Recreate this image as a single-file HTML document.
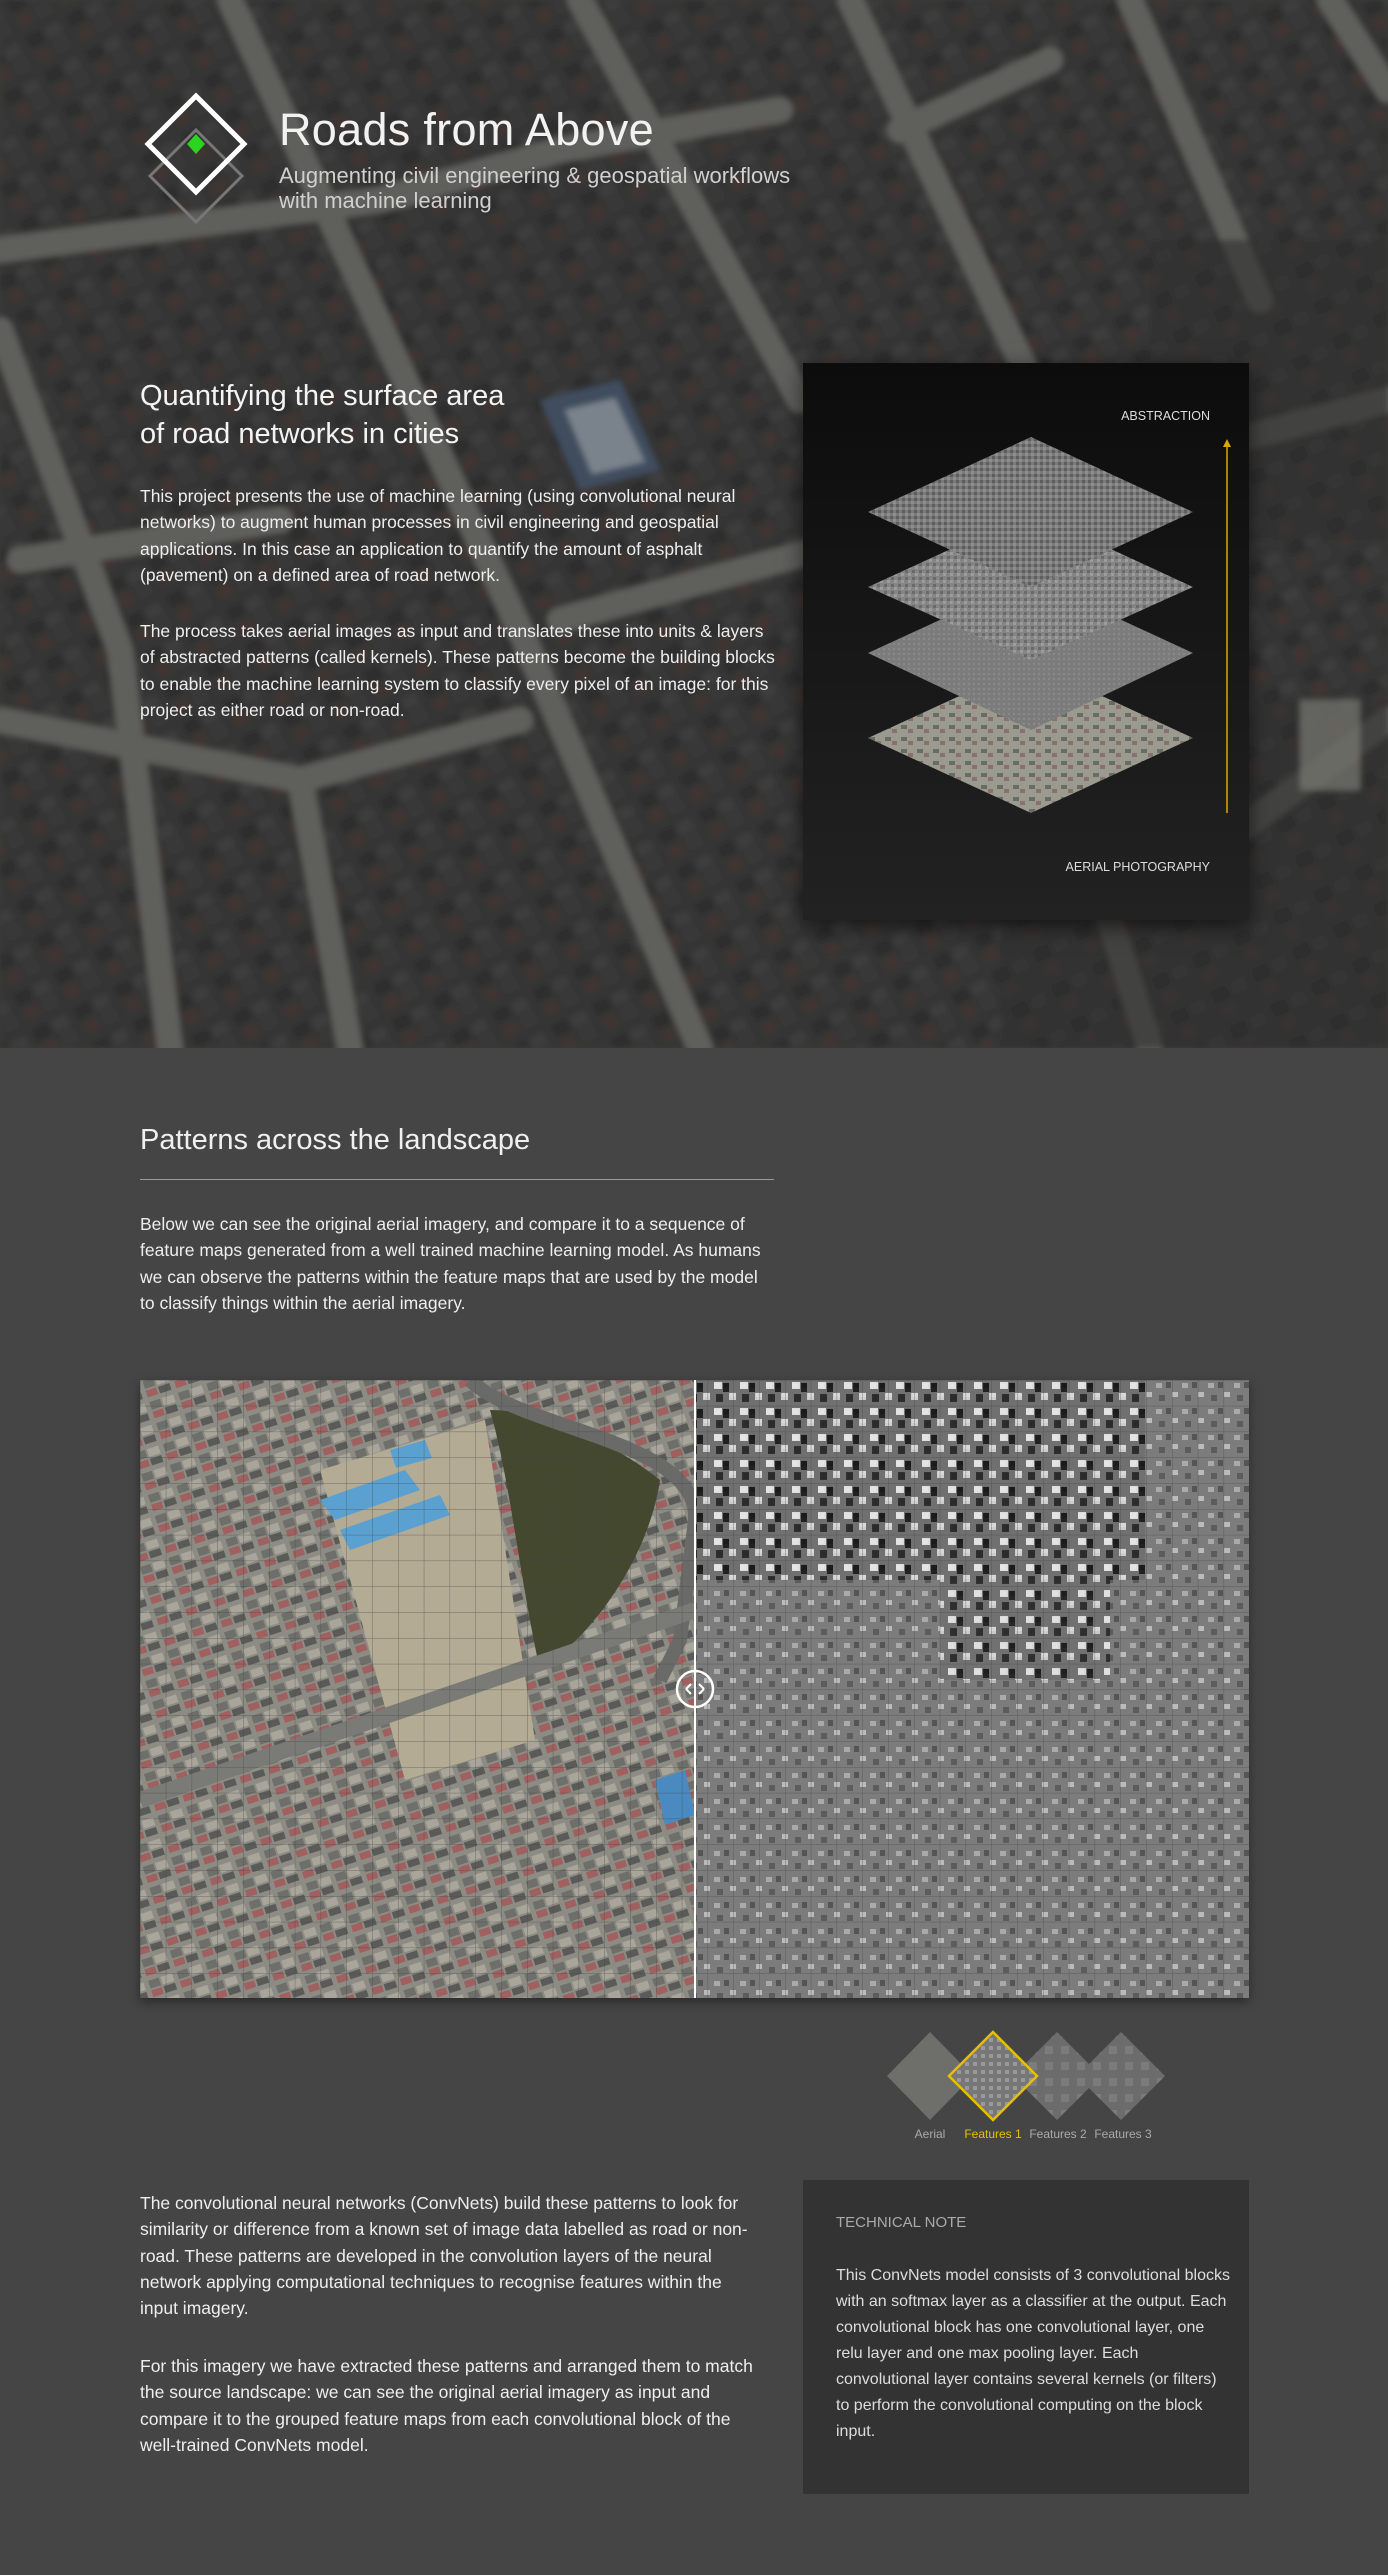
<!DOCTYPE html>
<html><head><meta charset="utf-8">
<style>
*{margin:0;padding:0;box-sizing:border-box}
body{width:1388px;height:2575px;background:#454545;font-family:"Liberation Sans",sans-serif;color:#fff;position:relative;overflow:hidden}
.abs{position:absolute}
.hero{position:absolute;left:0;top:0;width:1388px;height:1048px;background:#3a3a38;overflow:hidden}
.title{left:279px;top:104px;font-size:45px;font-weight:300;color:#f2f2f2;letter-spacing:0.3px}
.sub{left:279px;top:163px;font-size:22px;line-height:25px;color:#d0d0d0}
.h2{left:140px;top:377px;font-size:29px;line-height:38px;color:#f4f4f4}
.p{left:140px;width:620px;font-size:17.5px;line-height:26.3px;color:#eee}
.box{left:803px;top:363px;width:446px;height:557px;background:linear-gradient(#0c0c0c,#222);box-shadow:0 6px 20px rgba(0,0,0,.6)}
.h3{left:140px;top:1124px;font-size:29px;color:#f0f0f0}
.rule{left:140px;top:1179px;width:634px;height:1px;background:#9a9a9a}
.note{left:803px;top:2180px;width:446px;height:314px;background:#333}
.lbl{top:2127px;font-size:12px;color:#aaa;text-align:center;width:70px}
</style></head><body>
<div class="hero">
<svg width="1388" height="1048" viewBox="0 0 1388 1048">
<defs>
<pattern id="houses" width="46" height="40" patternUnits="userSpaceOnUse" patternTransform="rotate(-28)">
<rect width="46" height="40" fill="#363634"/>
<rect x="4" y="4" width="18" height="14" fill="#2e2e2d"/>
<rect x="25" y="6" width="16" height="12" fill="#3e3e3c"/>
<rect x="6" y="22" width="15" height="13" fill="#413432"/>
<rect x="26" y="22" width="16" height="14" fill="#393937"/>
</pattern>
<filter id="bl"><feGaussianBlur stdDeviation="3"/></filter>
</defs>
<g filter="url(#bl)">
<rect width="1388" height="1048" fill="url(#houses)"/>
<g stroke="#5f5f5b" stroke-width="26" fill="none" stroke-linecap="round">
<path d="M230 0 L520 630 L700 1048"/>
<path d="M0 330 L120 650 L170 1048"/>
<path d="M580 0 L800 400"/>
<path d="M850 0 L1030 380 L1150 560"/>
<path d="M1130 0 L1260 300"/>
<path d="M1330 0 L1388 90"/>
<path d="M0 250 L380 200 L560 150 L780 110"/>
<path d="M560 620 L780 560 L1388 400"/>
<path d="M0 720 L300 780 L520 720"/>
<path d="M300 780 L350 1048"/>
<path d="M900 130 L1050 60"/>
<path d="M20 560 L280 520"/>
<path d="M1110 920 L1150 1048"/>
<path d="M1200 860 L1388 720"/>
</g>
<rect x="1000" y="700" width="388" height="348" fill="#30302e" opacity=".6"/>
<rect x="1150" y="240" width="238" height="300" fill="#30302e" opacity=".6"/>
<polygon points="540,400 620,380 660,470 580,490" fill="#3f4d5e"/>
<polygon points="565,410 615,398 645,462 592,474" fill="#7a838c"/>
<rect x="1300" y="700" width="60" height="90" fill="#85857f" opacity=".6"/>
</g>
</svg>
</div>

<svg class="abs" style="left:140px;top:90px" width="112" height="140" viewBox="0 0 112 140">
<polygon points="56,40 102,86 56,132 10,86" fill="none" stroke="#777" stroke-width="3"/>
<polygon points="56,6 104,54 56,102 8,54" fill="none" stroke="#fff" stroke-width="5"/>
<polygon points="56,44 65,54 56,64 47,54" fill="#2bd41e"/>
</svg>
<div class="abs title">Roads from Above</div>
<div class="abs sub">Augmenting civil engineering &amp; geospatial workflows<br>with machine learning</div>
<div class="abs h2">Quantifying the surface area<br>of road networks in cities</div>
<div class="abs p" style="top:483px;width:636px">This project presents the use of machine learning (using convolutional neural networks) to augment human processes in civil engineering and geospatial applications. In this case an application to quantify the amount of asphalt (pavement) on a defined area of road network.</div>
<div class="abs p" style="top:618px;width:636px">The process takes aerial images as input and translates these into units &amp; layers of abstracted patterns (called kernels). These patterns become the building blocks to enable the machine learning system to classify every pixel of an image: for this project as either road or non-road.</div>

<div class="abs box">
<div class="abs" style="right:39px;top:46px;font-size:12.5px;color:#ddd">ABSTRACTION</div>
<div class="abs" style="right:39px;top:497px;font-size:12.5px;color:#ddd">AERIAL PHOTOGRAPHY</div>
<svg class="abs" style="left:0;top:0" width="446" height="557">
<defs>
<pattern id="n1" width="6" height="6" patternUnits="userSpaceOnUse"><rect width="6" height="6" fill="#7a7a7a"/><rect width="3" height="3" fill="#8e8e8e"/><rect x="3" y="3" width="3" height="3" fill="#5e5e5e"/></pattern>
<pattern id="n2" width="7" height="7" patternUnits="userSpaceOnUse"><rect width="7" height="7" fill="#858585"/><rect width="3" height="3" fill="#9c9c9c"/><rect x="4" y="4" width="3" height="3" fill="#6a6a6a"/></pattern>
<pattern id="n3" width="5" height="5" patternUnits="userSpaceOnUse"><rect width="5" height="5" fill="#7c7c7c"/><rect width="2" height="2" fill="#8a8a8a"/></pattern>
<pattern id="n4" width="16" height="12" patternUnits="userSpaceOnUse"><rect width="16" height="12" fill="#9a9a8e"/><rect x="2" y="2" width="6" height="4" fill="#6a6a66"/><rect x="9" y="6" width="5" height="4" fill="#8c7070"/></pattern>
</defs>
<polygon points="65,375 228,300 390,375 228,450" fill="url(#n4)"/>
<polygon points="65,290 228,215 390,290 228,367" fill="url(#n3)"/>
<polygon points="65,224 228,149 390,224 228,297" fill="url(#n2)"/>
<polygon points="65,149 228,74 390,149 228,224" fill="url(#n1)"/>
<line x1="424" y1="82" x2="424" y2="450" stroke="#d9a800" stroke-width="1.5"/>
<polygon points="424,76 420,84 428,84" fill="#d9a800"/>
</svg>
</div>

<div class="abs h3">Patterns across the landscape</div>
<div class="abs rule"></div>
<div class="abs p" style="top:1211px;width:630px">Below we can see the original aerial imagery, and compare it to a sequence of feature maps generated from a well trained machine learning model. As humans we can observe the patterns within the feature maps that are used by the model to classify things within the aerial imagery.</div>

<svg class="abs" style="left:140px;top:1380px;box-shadow:0 4px 10px rgba(0,0,0,.4)" width="1109" height="618">
<defs>
<pattern id="city" width="30" height="22" patternUnits="userSpaceOnUse" patternTransform="rotate(-18)">
<rect width="30" height="22" fill="#8c8c84"/>
<rect x="2" y="2" width="11" height="8" fill="#6e6e6a"/>
<rect x="15" y="2" width="12" height="8" fill="#a9a59a"/>
<rect x="2" y="12" width="11" height="7" fill="#a06060"/>
<rect x="15" y="12" width="12" height="7" fill="#5a5a58"/>
</pattern>
<pattern id="feat" width="26" height="26" patternUnits="userSpaceOnUse">
<rect width="26" height="26" fill="#7c7c7c"/>
<rect x="2" y="3" width="6" height="5" fill="#aaa"/><rect x="12" y="2" width="5" height="6" fill="#555"/>
<rect x="18" y="12" width="6" height="5" fill="#bbb"/><rect x="5" y="15" width="6" height="6" fill="#5c5c5c"/>
</pattern>
<pattern id="feat2" width="26" height="26" patternUnits="userSpaceOnUse">
<rect width="26" height="26" fill="#6e6e6e"/>
<rect x="2" y="2" width="8" height="7" fill="#eee"/><rect x="11" y="3" width="6" height="9" fill="#111"/>
<rect x="17" y="13" width="7" height="7" fill="#ddd"/><rect x="4" y="14" width="7" height="8" fill="#222"/>
</pattern>
<pattern id="grid" width="25.8" height="25.8" patternUnits="userSpaceOnUse"><path d="M0 0H25.8M0 0V25.8" stroke="#444" stroke-width="1" opacity=".6"/></pattern>
</defs>
<rect width="555" height="618" fill="url(#city)"/>
<polygon points="180,90 345,40 395,360 265,400" fill="#b3ab94"/>
<path d="M350 30 C400 30 470 60 520 100 C510 170 460 250 400 290 C380 200 370 100 350 30Z" fill="#44482e"/>
<path d="M330 0 C380 50 560 60 555 140 L540 260 L520 300" stroke="#6a6a68" stroke-width="14" fill="none"/>
<path d="M0 420 L555 230" stroke="#7a7a76" stroke-width="16"/>
<polygon points="180,120 265,90 280,110 195,140" fill="#5aa0d0"/>
<polygon points="200,150 300,115 310,135 210,170" fill="#5aa0d0"/>
<polygon points="250,70 285,60 292,78 256,88" fill="#5aa0d0"/>
<polygon points="515,400 545,390 555,435 525,445" fill="#4a8ac0"/>
<rect x="555" width="554" height="618" fill="url(#feat)"/>
<rect x="555" width="450" height="200" fill="url(#feat2)" opacity=".85"/>
<rect x="800" y="200" width="170" height="100" fill="url(#feat2)" opacity=".8"/>
<rect width="1109" height="618" fill="url(#grid)"/>
<line x1="555" y1="0" x2="555" y2="618" stroke="#fff" stroke-width="2"/>
<circle cx="555" cy="309" r="18" fill="none" stroke="#fff" stroke-width="2.5"/>
<path d="M546 309 L551 304 M546 309 L551 314 M564 309 L559 304 M564 309 L559 314" stroke="#fff" stroke-width="2"/>
</svg>

<svg class="abs" style="left:885px;top:2030px" width="290" height="96">
<defs>
<pattern id="t1" width="8" height="8" patternUnits="userSpaceOnUse"><rect width="8" height="8" fill="#777"/><rect width="4" height="4" fill="#999"/></pattern>
<pattern id="t2" width="16" height="16" patternUnits="userSpaceOnUse"><rect width="16" height="16" fill="#6c6c6c"/><rect width="8" height="8" fill="#7c7c7c"/></pattern>
</defs>
<polygon points="45,2 88,46 45,90 2,46" fill="#6e6e6a"/>
<polygon points="236,2 280,46 236,90 192,46" fill="url(#t2)"/>
<polygon points="172,2 216,46 172,90 128,46" fill="url(#t2)"/>
<polygon points="108,2 152,46 108,90 64,46" fill="url(#t1)" stroke="#e8c000" stroke-width="2.5"/>
</svg>
<div class="abs lbl" style="left:895px">Aerial</div>
<div class="abs lbl" style="left:958px;color:#e6c000">Features 1</div>
<div class="abs lbl" style="left:1023px">Features 2</div>
<div class="abs lbl" style="left:1088px">Features 3</div>

<div class="abs p" style="top:2190px;width:620px">The convolutional neural networks (ConvNets) build these patterns to look for similarity or difference from a known set of image data labelled as road or non-road. These patterns are developed in the convolution layers of the neural network applying computational techniques to recognise features within the input imagery.</div>
<div class="abs p" style="top:2353px;width:620px">For this imagery we have extracted these patterns and arranged them to match the source landscape: we can see the original aerial imagery as input and compare it to the grouped feature maps from each convolutional block of the well-trained ConvNets model.</div>

<div class="abs note">
<div class="abs" style="left:33px;top:34px;font-size:15px;color:#aaa">TECHNICAL NOTE</div>
<div class="abs" style="left:33px;top:83px;width:396px;font-size:16px;line-height:26px;color:#ddd">This ConvNets model consists of 3 convolutional blocks with an softmax layer as a classifier at the output. Each convolutional block has one convolutional layer, one relu layer and one max pooling layer. Each convolutional layer contains several kernels (or filters) to perform the convolutional computing on the block input.</div>
</div>
</body></html>
